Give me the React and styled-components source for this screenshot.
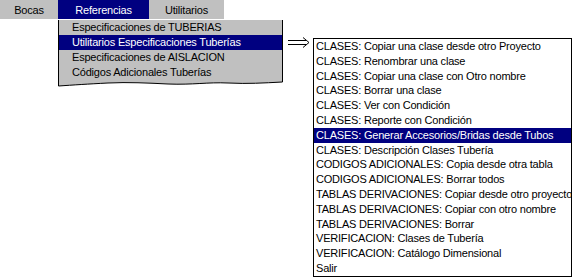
import styled, { createGlobalStyle } from 'styled-components'

const GlobalStyle = createGlobalStyle`
  body {
    margin: 0;
    background: #ffffff;
    font-family: "Liberation Sans", Arial, sans-serif;
    font-size: 11px;
    letter-spacing: -0.2px;
    color: #000;
  }
`

const NAVY = '#000080'
const GRAY = '#c0c0c0'

const tabs = [
    { label: 'Bocas', width: 58 },
    { label: 'Referencias', width: 91, active: true },
    { label: 'Utilitarios', width: 75 },
]

const refItems = [
    'Especificaciones de TUBERIAS',
    'Utilitarios Especificaciones Tuberías',
    'Especificaciones de AISLACION',
    'Códigos Adicionales Tuberías',
]

const subItems = [
    'CLASES: Copiar una clase desde otro Proyecto',
    'CLASES: Renombrar una clase',
    'CLASES: Copiar una clase con Otro nombre',
    'CLASES: Borrar una clase',
    'CLASES: Ver con Condición',
    'CLASES: Reporte con Condición',
    'CLASES: Generar Accesorios/Bridas desde Tubos',
    'CLASES: Descripción Clases Tubería',
    'CODIGOS ADICIONALES: Copia desde otra tabla',
    'CODIGOS ADICIONALES: Borrar todos',
    'TABLAS DERIVACIONES: Copiar desde otro proyecto',
    'TABLAS DERIVACIONES: Copiar con otro nombre',
    'TABLAS DERIVACIONES: Borrar',
    'VERIFICACION: Clases de Tubería',
    'VERIFICACION: Catálogo Dimensional',
    'Salir',
]

export default function App() {
    return (
        <Screen>
            <GlobalStyle />
            <MenuBar>
                {tabs.map(t => (
                    <MenuTab key={t.label} $width={t.width} $active={t.active}>{t.label}</MenuTab>
                ))}
            </MenuBar>

            <Stage>
                <Dropdown>
                    <DropList>
                        {refItems.map((item, i) => (
                            <DropItem key={item} $selected={i === 1}>{item}</DropItem>
                        ))}
                    </DropList>
                    <TornEdge width="225" height="10" viewBox="0 0 225 10">
                        <path
                            d="M0 0 H225 V2 C205 3 190 4 170 3 C150 2 135 5 110 4 C90 3 70 2 50 3 C30 4 15 5 0 6 Z"
                            fill={GRAY}
                        />
                        <path
                            d="M0.5 0 V6 C15 5 30 4 50 3 C70 2 90 3 110 4 C135 5 150 2 170 3 C190 4 205 3 224.5 2 V0"
                            fill="none"
                            stroke="#000"
                            strokeWidth="1"
                        />
                    </TornEdge>
                </Dropdown>

                <ArrowSlot>
                    <svg width="22" height="11" viewBox="0 0 22 11">
                        <path d="M0 3.5 H18 M0 7.5 H18" stroke="#000" strokeWidth="1" />
                        <path d="M15 0.5 L21 5.5 L15 10.5" stroke="#000" strokeWidth="1" fill="none" />
                    </svg>
                </ArrowSlot>

                <SubMenu>
                    {subItems.map((item, i) => (
                        <SubItem key={item} $selected={i === 6}>{item}</SubItem>
                    ))}
                </SubMenu>
            </Stage>
        </Screen>
    )
}

const Screen = styled.div`
    width: 572px;
    height: 279px;
    overflow: hidden;
`

const MenuBar = styled.div`
    display: flex;
    width: 224px;
    height: 19px;
    background: ${GRAY};
`

const MenuTab = styled.div`
    width: ${p => p.$width}px;
    display: flex;
    align-items: center;
    justify-content: center;
    background: ${p => (p.$active ? NAVY : 'transparent')};
    color: ${p => (p.$active ? '#fff' : '#000')};
    white-space: nowrap;
`

const Stage = styled.div`
    display: flex;
    align-items: flex-start;
    padding-top: 1px;
`

const Dropdown = styled.div`
    margin-left: 58px;
    width: 225px;
    display: flex;
    flex-direction: column;
`

const DropList = styled.div`
    background: ${GRAY};
    border-left: 1px solid #000;
    border-right: 1px solid #000;
`

const DropItem = styled.div`
    height: 15px;
    line-height: 15px;
    padding-left: 13px;
    white-space: nowrap;
    background: ${p => (p.$selected ? NAVY : 'transparent')};
    color: ${p => (p.$selected ? '#fff' : '#000')};
`

const TornEdge = styled.svg`
    display: block;
`

const ArrowSlot = styled.div`
    width: 30px;
    padding-top: 17px;
    padding-left: 5px;
    box-sizing: border-box;

    svg {
        display: block;
    }
`

const SubMenu = styled.div`
    margin-top: 18px;
    width: 259px;
    border: 1px solid #000;
    background: #fff;
    box-sizing: border-box;
`

const SubItem = styled.div`
    height: 14.8px;
    line-height: 14.8px;
    padding-left: 2px;
    white-space: nowrap;
    background: ${p => (p.$selected ? NAVY : 'transparent')};
    color: ${p => (p.$selected ? '#fff' : '#000')};
`
